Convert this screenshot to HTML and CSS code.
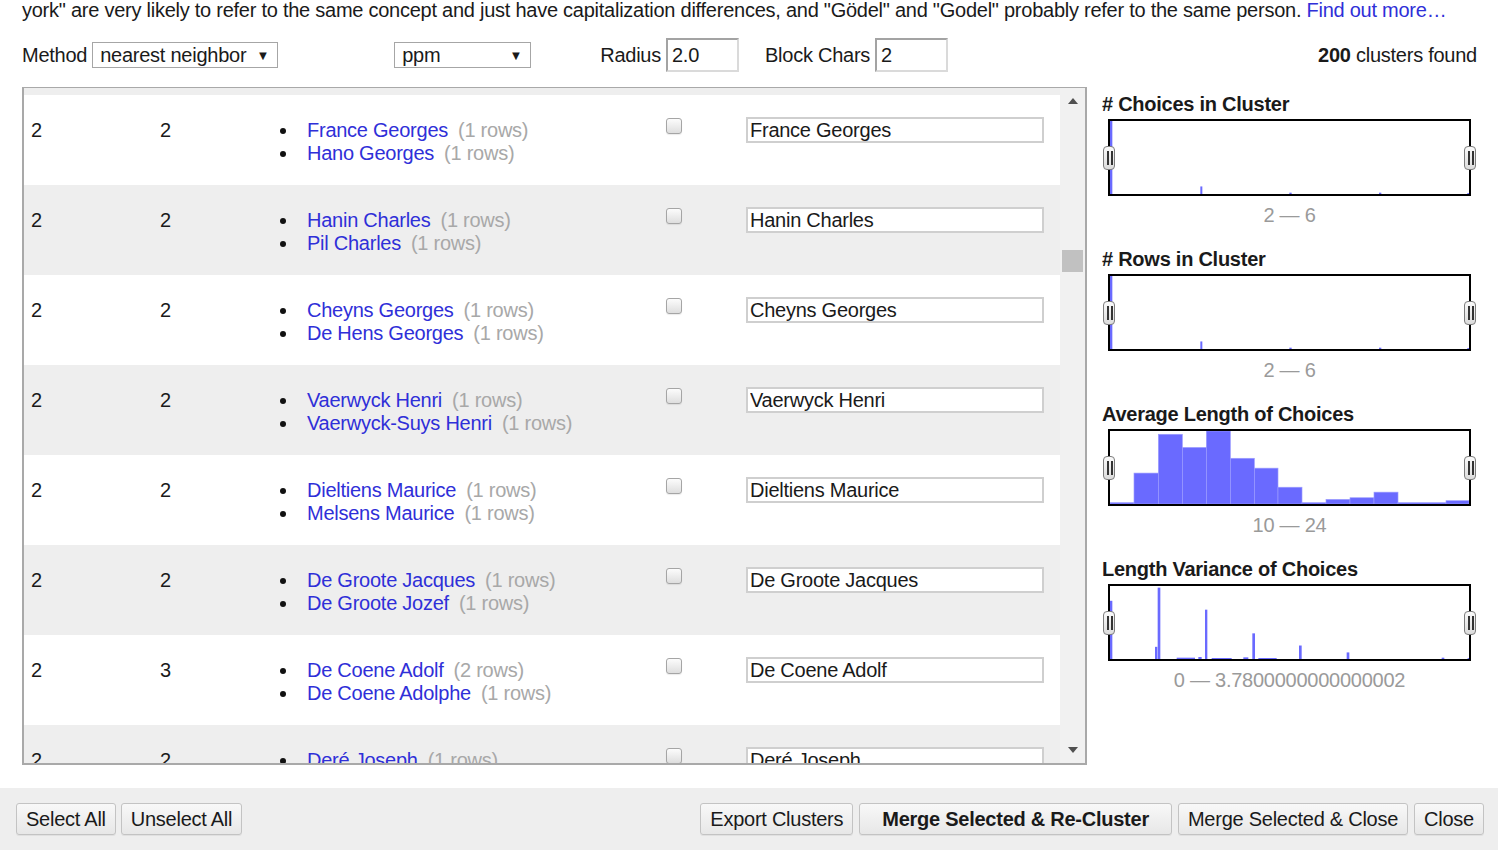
FILE: index.html
```html
<!DOCTYPE html>
<html lang="en">
<head>
<meta charset="utf-8">
<title>Cluster &amp; Edit</title>
<link rel="stylesheet" href="styles.css">
</head>
<body>
<div class="page">
  <p class="intro">york" are very likely to refer to the same concept and just have capitalization differences, and "Gödel" and "Godel" probably refer to the same person. <a href="#">Find out more…</a></p>

  <div class="controls">
    <span class="lbl">Method</span>
    <div class="select sel-method"><span>nearest neighbor</span><span class="caret">▼</span></div>
    <div class="select sel-ppm"><span>ppm</span><span class="caret">▼</span></div>
    <span class="lbl lbl-radius">Radius</span>
    <input class="num" type="text" value="2.0">
    <span class="lbl lbl-block">Block Chars</span>
    <input class="num" type="text" value="2">
    <span class="found"><b>200</b> clusters found</span>
  </div>

  <div class="main">
    <div class="table-box">
      <div class="rows">
        <div class="row odd tail"></div>

        <div class="row">
          <div class="c-count">2</div><div class="c-rows">2</div>
          <ul class="c-values">
            <li><a href="#">France Georges</a><span class="cnt">(1 rows)</span></li>
            <li><a href="#">Hano Georges</a><span class="cnt">(1 rows)</span></li>
          </ul>
          <div class="c-merge"><input class="chk" type="checkbox"></div>
          <input class="c-new" type="text" value="France Georges">
        </div>

        <div class="row odd">
          <div class="c-count">2</div><div class="c-rows">2</div>
          <ul class="c-values">
            <li><a href="#">Hanin Charles</a><span class="cnt">(1 rows)</span></li>
            <li><a href="#">Pil Charles</a><span class="cnt">(1 rows)</span></li>
          </ul>
          <div class="c-merge"><input class="chk" type="checkbox"></div>
          <input class="c-new" type="text" value="Hanin Charles">
        </div>

        <div class="row">
          <div class="c-count">2</div><div class="c-rows">2</div>
          <ul class="c-values">
            <li><a href="#">Cheyns Georges</a><span class="cnt">(1 rows)</span></li>
            <li><a href="#">De Hens Georges</a><span class="cnt">(1 rows)</span></li>
          </ul>
          <div class="c-merge"><input class="chk" type="checkbox"></div>
          <input class="c-new" type="text" value="Cheyns Georges">
        </div>

        <div class="row odd">
          <div class="c-count">2</div><div class="c-rows">2</div>
          <ul class="c-values">
            <li><a href="#">Vaerwyck Henri</a><span class="cnt">(1 rows)</span></li>
            <li><a href="#">Vaerwyck-Suys Henri</a><span class="cnt">(1 rows)</span></li>
          </ul>
          <div class="c-merge"><input class="chk" type="checkbox"></div>
          <input class="c-new" type="text" value="Vaerwyck Henri">
        </div>

        <div class="row">
          <div class="c-count">2</div><div class="c-rows">2</div>
          <ul class="c-values">
            <li><a href="#">Dieltiens Maurice</a><span class="cnt">(1 rows)</span></li>
            <li><a href="#">Melsens Maurice</a><span class="cnt">(1 rows)</span></li>
          </ul>
          <div class="c-merge"><input class="chk" type="checkbox"></div>
          <input class="c-new" type="text" value="Dieltiens Maurice">
        </div>

        <div class="row odd">
          <div class="c-count">2</div><div class="c-rows">2</div>
          <ul class="c-values">
            <li><a href="#">De Groote Jacques</a><span class="cnt">(1 rows)</span></li>
            <li><a href="#">De Groote Jozef</a><span class="cnt">(1 rows)</span></li>
          </ul>
          <div class="c-merge"><input class="chk" type="checkbox"></div>
          <input class="c-new" type="text" value="De Groote Jacques">
        </div>

        <div class="row">
          <div class="c-count">2</div><div class="c-rows">3</div>
          <ul class="c-values">
            <li><a href="#">De Coene Adolf</a><span class="cnt">(2 rows)</span></li>
            <li><a href="#">De Coene Adolphe</a><span class="cnt">(1 rows)</span></li>
          </ul>
          <div class="c-merge"><input class="chk" type="checkbox"></div>
          <input class="c-new" type="text" value="De Coene Adolf">
        </div>

        <div class="row odd">
          <div class="c-count">2</div><div class="c-rows">2</div>
          <ul class="c-values">
            <li><a href="#">Deré Joseph</a><span class="cnt">(1 rows)</span></li>
            <li><a href="#">Deré Jozef</a><span class="cnt">(1 rows)</span></li>
          </ul>
          <div class="c-merge"><input class="chk" type="checkbox"></div>
          <input class="c-new" type="text" value="Deré Joseph">
        </div>
      </div>
      <div class="scrollbar">
        <svg class="arrow" width="10" height="6" viewBox="0 0 10 6"><path d="M0 6 L5 0 L10 6 Z" fill="#505050"/></svg>
        <div class="track"><div class="thumb"></div></div>
        <svg class="arrow" width="10" height="6" viewBox="0 0 10 6"><path d="M0 0 L10 0 L5 6 Z" fill="#505050"/></svg>
      </div>
    </div>

    <div class="facets">
      <section class="facet">
        <h3># Choices in Cluster</h3>
        <div class="hist">
          <svg viewBox="0 0 1077 222" preserveAspectRatio="none">
            <g fill="#6a6aff">
              <rect x="0" y="0" width="7" height="222"/>
              <rect x="271" y="199" width="6" height="23"/>
              <rect x="538" y="218" width="7" height="4"/>
              <rect x="807" y="218" width="7" height="4"/>
              <rect x="1072" y="219" width="5" height="3"/>
            </g>
          </svg>
          <span class="handle h-left"></span><span class="handle h-right"></span>
        </div>
        <div class="range">2 — 6</div>
      </section>

      <section class="facet">
        <h3># Rows in Cluster</h3>
        <div class="hist">
          <svg viewBox="0 0 1077 222" preserveAspectRatio="none">
            <g fill="#6a6aff">
              <rect x="0" y="0" width="7" height="222"/>
              <rect x="271" y="199" width="6" height="23"/>
              <rect x="538" y="218" width="7" height="4"/>
              <rect x="807" y="218" width="7" height="4"/>
              <rect x="1072" y="219" width="5" height="3"/>
            </g>
          </svg>
          <span class="handle h-left"></span><span class="handle h-right"></span>
        </div>
        <div class="range">2 — 6</div>
      </section>

      <section class="facet">
        <h3>Average Length of Choices</h3>
        <div class="hist">
          <svg viewBox="0 0 1077 222" preserveAspectRatio="none">
            <g fill="#6a6aff" stroke="#9c9cff" stroke-width="2">
              <rect x="0" y="218" width="72" height="4"/>
              <rect x="72" y="128" width="73" height="94"/>
              <rect x="145" y="10" width="72" height="212"/>
              <rect x="217" y="50" width="72" height="172"/>
              <rect x="289" y="0" width="72" height="222"/>
              <rect x="361" y="83" width="72" height="139"/>
              <rect x="433" y="113" width="71" height="109"/>
              <rect x="504" y="171" width="72" height="51"/>
              <rect x="576" y="218" width="72" height="4"/>
              <rect x="648" y="208" width="72" height="14"/>
              <rect x="720" y="203" width="72" height="19"/>
              <rect x="792" y="186" width="72" height="36"/>
              <rect x="864" y="218" width="144" height="4"/>
              <rect x="1008" y="212" width="69" height="10"/>
            </g>
          </svg>
          <span class="handle h-left"></span><span class="handle h-right"></span>
        </div>
        <div class="range">10 — 24</div>
      </section>

      <section class="facet">
        <h3>Length Variance of Choices</h3>
        <div class="hist">
          <svg viewBox="0 0 1077 222" preserveAspectRatio="none">
            <g fill="#6a6aff">
              <rect x="0" y="45" width="7" height="177"/>
              <rect x="135" y="185" width="7" height="37"/>
              <rect x="143" y="5" width="8" height="217"/>
              <rect x="200" y="218" width="55" height="4"/>
              <rect x="265" y="216" width="10" height="6"/>
              <rect x="285" y="72" width="7" height="150"/>
              <rect x="305" y="219" width="60" height="3"/>
              <rect x="400" y="217" width="15" height="5"/>
              <rect x="427" y="144" width="8" height="78"/>
              <rect x="445" y="219" width="55" height="3"/>
              <rect x="567" y="181" width="8" height="41"/>
              <rect x="710" y="202" width="8" height="20"/>
              <rect x="995" y="218" width="8" height="4"/>
              <rect x="1073" y="219" width="4" height="3"/>
            </g>
          </svg>
          <span class="handle h-left"></span><span class="handle h-right"></span>
        </div>
        <div class="range">0 — 3.7800000000000002</div>
      </section>
    </div>
  </div>

  <div class="footer">
    <div class="btn-group">
      <button class="btn">Select All</button>
      <button class="btn">Unselect All</button>
    </div>
    <div class="btn-group">
      <button class="btn">Export Clusters</button>
      <button class="btn btn-primary">Merge Selected &amp; Re-Cluster</button>
      <button class="btn">Merge Selected &amp; Close</button>
      <button class="btn">Close</button>
    </div>
  </div>
</div>
</body>
</html>
```

FILE: styles.css
```css
* { box-sizing: border-box; }

html, body {
  margin: 0;
  padding: 0;
  background: #fff;
}

body {
  font-family: "Liberation Sans", Arial, sans-serif;
  font-size: 20px;
  letter-spacing: -0.25px;
  color: #1a1a1a;
  overflow: hidden;
}

.page {
  width: 1498px;
  height: 850px;
  display: flex;
  flex-direction: column;
}

a {
  color: #2f2fd8;
  text-decoration: none;
}

.intro {
  margin: -1px 0 0 0;
  padding: 0 22px;
  line-height: 23px;
  white-space: nowrap;
}

/* controls */
.controls {
  display: flex;
  align-items: center;
  height: 34px;
  margin-top: 16px;
  padding: 0 21px 0 22px;
}

.lbl { line-height: 23px; }

.select {
  display: flex;
  align-items: center;
  justify-content: space-between;
  height: 26px;
  border: 1px solid #a6a6a6;
  background: #fff;
  padding: 0 8px 0 7px;
  margin-left: 5px;
}

.select .caret {
  font-size: 13px;
}

.sel-method { width: 186px; }
.sel-ppm { width: 137px; margin-left: 116px; }

.lbl-radius { margin-left: 69px; }
.lbl-block { margin-left: 26px; }

.num {
  width: 73px;
  height: 34px;
  margin-left: 5px;
  border: 2px solid;
  border-color: #a3a3a3 #dadada #dadada #a3a3a3;
  font: inherit;
  letter-spacing: inherit;
  padding: 0 4px;
  color: #1a1a1a;
  outline: none;
}

.found {
  margin-left: auto;
}

/* main */
.main {
  display: flex;
  gap: 15px;
  height: 678px;
  margin-top: 15px;
  padding-left: 22px;
}

.table-box {
  width: 1065px;
  height: 678px;
  border: 2px solid #a9a9a9;
  border-top-width: 1px;
  display: flex;
  overflow: hidden;
}

.rows {
  flex: 1;
  overflow: hidden;
}

.row {
  height: 90px;
  display: flex;
  align-items: flex-start;
  padding: 24px 0 0 7px;
  background: #fff;
}

.row.odd { background: #eeeeee; }

.row.tail {
  height: 7px;
  padding: 0;
}

.c-count, .c-rows {
  line-height: 23px;
}

.c-count { width: 129px; }
.c-rows { width: 100px; }

.c-values {
  width: 406px;
  margin: 0;
  padding: 0 0 0 47px;
  line-height: 23px;
  list-style: none;
}

.c-values li {
  position: relative;
}

.c-values li::before {
  content: "";
  position: absolute;
  left: -27px;
  top: 9px;
  width: 6px;
  height: 6px;
  border-radius: 50%;
  background: #111;
}

.c-values .cnt {
  color: #a8a8a8;
  margin-left: 10px;
}

.c-merge {
  width: 80px;
  margin-top: -1px;
}

.chk {
  appearance: none;
  -webkit-appearance: none;
  display: block;
  margin: 0;
  width: 16px;
  height: 16px;
  border: 1px solid #a5a5a5;
  border-radius: 3px;
  background: linear-gradient(#fcfcfc, #dedede);
  box-shadow: 0 1px 1px rgba(0,0,0,0.08);
}

.c-new {
  width: 298px;
  height: 26px;
  margin-top: -2px;
  border: 2px solid #cfcfcf;
  background: #fff;
  font: inherit;
  letter-spacing: inherit;
  color: #1a1a1a;
  padding: 0 2px;
  outline: none;
}

/* scrollbar */
.scrollbar {
  width: 25px;
  background: #f1f1f1;
  display: flex;
  flex-direction: column;
  align-items: center;
  padding: 10px 0 10px;
}

.scrollbar .arrow { flex: none; }

.track {
  flex: 1;
  width: 100%;
  padding: 0 2px;
  padding-top: 146px;
}

.thumb {
  height: 22px;
  background: #c1c1c1;
}

/* facets */
.facets {
  width: 376px;
  padding-top: 6px;
}

.facet h3 {
  margin: 0;
  font-size: 20px;
  font-weight: bold;
  line-height: 23px;
}

.facet + .facet { margin-top: 21px; }

.hist {
  position: relative;
  width: 363px;
  height: 77px;
  margin: 3px 0 0 6px;
  border: 2px solid #000;
  background: #fff;
}

.hist svg {
  display: block;
  width: 100%;
  height: 100%;
}

.handle {
  position: absolute;
  top: 50%;
  width: 12px;
  height: 24px;
  margin-top: -12px;
  border: 1px solid #7d7d7d;
  border-radius: 4px;
  background: linear-gradient(#fafafa, #dcdcdc);
}

.handle::before {
  content: "";
  position: absolute;
  left: 3px;
  top: 4px;
  height: 14px;
  border-left: 2px solid #333;
  border-right: 2px solid #333;
  box-sizing: content-box;
  width: 0px;
  padding: 0 1px;
}

.h-left { left: -7px; }
.h-right { right: -7px; }

.range {
  width: 363px;
  margin: 8px 0 0 6px;
  text-align: center;
  color: #9a9a9a;
  line-height: 23px;
}

/* footer */
.footer {
  margin-top: 23px;
  height: 62px;
  background: #eeeeee;
  display: flex;
  justify-content: space-between;
  align-items: flex-start;
  padding: 15px 14px 0 16px;
}

.btn-group {
  display: flex;
  gap: 5px;
}

.btn-group + .btn-group { gap: 6px; }

.btn {
  height: 32px;
  padding: 0 9px;
  font: inherit;
  letter-spacing: inherit;
  color: #1a1a1a;
  border: 1px solid #c3c3c3;
  border-radius: 3px;
  background: linear-gradient(#f8f8f8, #e7e7e7);
  box-shadow: 0 1px 0 rgba(0,0,0,0.06);
}

.btn-primary {
  font-weight: bold;
  padding: 0 22px;
}
```
